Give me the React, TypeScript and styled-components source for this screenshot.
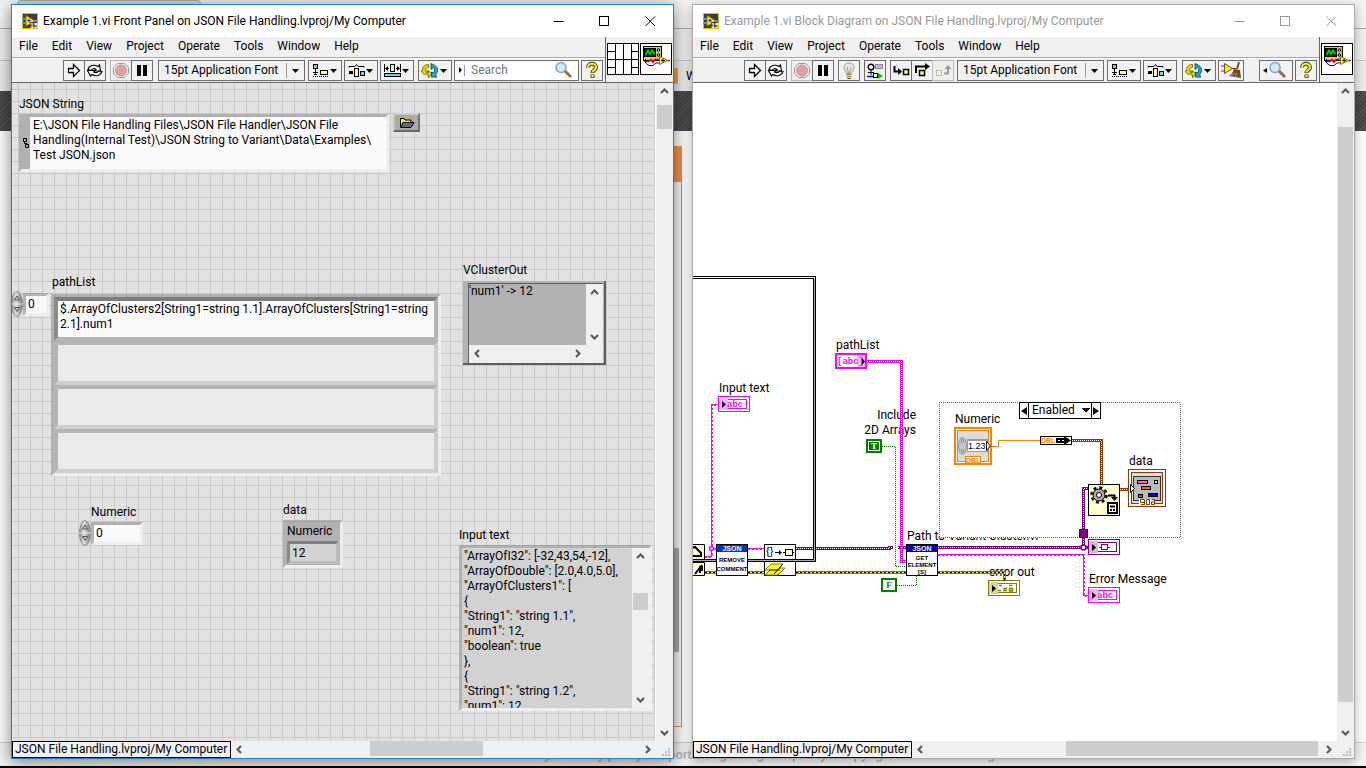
import React from 'react';
import styled, { createGlobalStyle, css } from 'styled-components';

const font = 'Roboto, "Open Sans", sans-serif';
const PINK = '#ff00ff';
const PURPLE = '#800080';
const BROWN = '#993300';
const ORANGE = '#ff8000';
const GREEN = '#008000';

const Global = createGlobalStyle`
  *, *::before, *::after { box-sizing: border-box; }
  body { margin: 0; font: 12px/15px ${font}; color: #000; }
  button, input, textarea, select { font: inherit; color: inherit; margin: 0; padding: 0; border: 0; border-radius: 0; background: none; outline: none; }
  svg { display: block; }
`;

/* ---------- desktop and the page behind the windows ---------- */

const Screen = styled.div`
  display: grid;
  grid-template-rows: 1fr 2px;
  min-height: 100vh;
  overflow: hidden;
`;
const Layer = css`
  grid-column: 1;
  grid-row: 1;
  min-width: 0;
`;
const Backdrop = styled.div`
  ${Layer}
  display: flex;
  flex-direction: column;
  background: #fdfdfd;
`;
const TabStrip = styled.div`
  height: 29px;
  padding-left: 17px;
  background: #f3f3f3;
  border-bottom: 1px solid #aaa;
`;
const BrowserTab = styled.div`
  width: 184px;
  height: 28px;
  border: 1px solid #aaa;
  border-radius: 4px 4px 0 0;
  background: #dcdcdc;
`;
const AddressRow = styled.div`
  height: 32px;
  background: #efefef;
  border-bottom: 1px solid #c8c8c8;
`;
const BookmarkRow = styled.div`
  display: flex;
  align-items: center;
  gap: 8px;
  height: 30px;
  padding-left: 662px;
  background: #ececec;
`;
const Favicon = styled.span`
  width: 16px;
  height: 16px;
  border-radius: 2px;
  background: #e8a33c;
`;
const DarkBand = styled.div`
  height: 40px;
  background: repeating-linear-gradient(135deg, #444 0 2px, #555 2px 3px);
`;
const PageBody = styled.div`
  flex: 1;
  display: grid;
  grid-template-columns: 1fr 1fr;
  padding: 15px 0;
`;
const Card = styled.div`
  display: flex;
  flex-direction: column;
  align-items: flex-end;
  margin-left: 300px;
  margin-right: 1px;
  border: 1px solid #e8874a;
  border-top: 36px solid #f0914d;
  background: #f7f7f7;
`;
const CardThumb = styled.div`
  flex: none;
  width: 8px;
  height: 104px;
  margin: 366px 2px 0 0;
  background: #aaa;
`;
const PageFooter = styled.div`
  height: 24px;
  padding-left: 544px;
  border-top: 1px solid #ccc;
  background: #f3f3f3;
  color: #b4b4b4;
  font: bold 12px/24px "Liberation Sans", sans-serif;
  white-space: nowrap;
  overflow: hidden;
`;
const Taskbar = styled.div`
  background: #000;
`;
const Desktop = styled.main`
  ${Layer}
  display: grid;
  grid-template-columns: 1fr 1fr;
  gap: 18px;
  padding: 4px 11px 7px;
`;

/* ---------- window frame ---------- */

const Win = styled.section<{ $active?: boolean }>`
  display: flex;
  flex-direction: column;
  min-width: 0;
  overflow: hidden;
  border: 1px solid ${p => (p.$active ? '#1883d7' : '#aaa')};
  background: #f0f0f0;
  box-shadow: 0 3px ${p => (p.$active ? '16px rgba(0,0,0,.5)' : '10px rgba(0,0,0,.3)')};
`;
const TitleBar = styled.header<{ $active?: boolean }>`
  display: flex;
  align-items: center;
  height: 32px;
  padding-left: 10px;
  background: #fff;
  color: ${p => (p.$active ? '#000' : '#999')};
`;
const Title = styled.h1`
  flex: 1;
  margin: 0 0 0 5px;
  font-size: 12px;
  font-weight: 400;
  line-height: 16px;
  white-space: nowrap;
`;
const CaptionButton = styled.button`
  display: grid;
  place-items: center;
  width: 46px;
  height: 32px;
`;
const Head = styled.div`
  display: flex;
  height: 46px;
  border-bottom: 1px solid #666;
`;
const Bars = styled.div`
  flex: 1;
  min-width: 0;
`;
const Menu = styled.nav`
  display: flex;
  gap: 14px;
  height: 21px;
  padding: 0 7px;
  border-bottom: 1px solid #a8a8a8;
`;
const MenuButton = styled.button`
  height: 18px;
  line-height: 18px;
`;
const Toolbar = styled.div`
  display: flex;
  height: 24px;
  padding: 1px 2px 0 51px;
  gap: 2px;
  border-top: 1px solid #fff;
`;
const Group = styled.div<{ $lead?: number }>`
  display: flex;
  margin-left: ${p => p.$lead ?? 0}px;
`;
const ToolButton = styled.button<{ $w?: number; $dim?: boolean }>`
  flex: none;
  display: grid;
  place-items: center;
  width: ${p => p.$w ?? 22}px;
  height: 21px;
  border: 1px solid ${p => (p.$dim ? '#bbb' : '#6e6e6e')};
  background: ${p => (p.$dim ? '#eee' : '#f2f2f2')};
  & + & { margin-left: -1px; }
`;
const FontRing = styled.label`
  display: flex;
  align-items: center;
  position: relative;
  width: 147px;
  height: 21px;
  border: 1px solid #6e6e6e;
  background: #f2f2f2;
`;
const RingSelect = styled.select`
  appearance: none;
  width: 100%;
  height: 19px;
  padding-left: 5px;
`;
const RingArrow = styled.span`
  position: absolute;
  right: 0;
  top: 2px;
  display: grid;
  place-items: center;
  width: 18px;
  height: 15px;
  border-left: 1px solid #999;
  pointer-events: none;
`;
const SearchBox = styled.label`
  display: flex;
  align-items: center;
  flex: 1;
  min-width: 0;
  height: 21px;
  margin-left: 0;
  padding: 0 6px 0 3px;
  border: 1px solid #6e6e6e;
  background: #fff;
`;
const SearchInput = styled.input`
  flex: 1;
  min-width: 0;
  margin-left: 5px;
  &::placeholder { color: #777; opacity: 1; }
`;
const IconPane = styled.div`
  display: flex;
  gap: 1px;
  padding: 6px 1px 0;
  border-left: 1px solid #666;
`;
const Body = styled.div`
  flex: 1;
  display: flex;
  min-height: 0;
`;
const FrontPanel = styled.div`
  position: relative;
  flex: 1;
  overflow: hidden;
  border-right: 1px solid #fff;
  background-color: #e2e2e2;
  background-image: linear-gradient(to right, #c8c8c8 1px, transparent 1px), linear-gradient(#c8c8c8 1px, transparent 1px);
  background-size: 12px 12px;
  background-position: 6px 6px;
`;
const DiagramPanel = styled.div`
  position: relative;
  flex: 1;
  overflow: hidden;
  background: #fff;
`;
const Bottom = styled.footer`
  display: flex;
  height: 17px;
`;
const Status = styled.div`
  flex: none;
  min-width: 219px;
  padding: 0 2px;
  border: 1px solid #000;
  background: #f2f2f2;
  white-space: nowrap;
`;
const Grip = styled.div`
  display: grid;
  place-items: end;
  width: 17px;
  padding: 0 2px 1px 0;
`;

/* ---------- scroll bars ---------- */

const Bar = styled.div<{ $row?: boolean }>`
  display: flex;
  flex: ${p => (p.$row ? '1' : 'none')};
  flex-direction: ${p => (p.$row ? 'row' : 'column')};
  width: ${p => (p.$row ? 'auto' : '17px')};
  height: ${p => (p.$row ? '17px' : 'auto')};
  background: #f0f0f0;
`;
const BarButton = styled.button`
  display: grid;
  place-items: center;
  flex: none;
  width: 17px;
  height: 17px;
`;
const BarSpace = styled.div<{ $n: number }>`
  flex: ${p => p.$n} 1 0;
`;
const Thumb = styled(BarSpace)<{ $row?: boolean }>`
  margin: ${p => (p.$row ? '0 0 2px' : '0 1px')};
  background: #cdcdcd;
`;

const chevrons = {
  up: 'M1 6 4.5 2.5 8 6',
  down: 'M1 3 4.5 6.5 8 3',
  left: 'M6 1 2.5 4.5 6 8',
  right: 'M3 1 6.5 4.5 3 8',
};
type Dir = keyof typeof chevrons;
const Chevron = ({ d }: { d: Dir }) => (
  <svg width="9" height="9"><path d={chevrons[d]} fill="none" stroke="#555" strokeWidth="2" /></svg>
);
const ScrollBar = ({ row, track }: { row?: boolean; track?: [number, number, number] }) => (
  <Bar $row={row}>
    <BarButton aria-label={row ? 'Scroll left' : 'Scroll up'}><Chevron d={row ? 'left' : 'up'} /></BarButton>
    <BarSpace $n={track ? track[0] : 1} />
    {track && <Thumb $n={track[1]} $row={row} />}
    {track && <BarSpace $n={track[2]} />}
    <BarButton aria-label={row ? 'Scroll right' : 'Scroll down'}><Chevron d={row ? 'right' : 'down'} /></BarButton>
  </Bar>
);

/* ---------- icons ---------- */

const AppIcon = () => (
  <svg width="16" height="16">
    <rect x=".5" y=".5" width="15" height="15" fill="#3c3c3c" stroke="#f5b800" />
    <path d="M0 6H5M0 10H5M10 8H16" stroke="#3f9fd0" strokeWidth="2" />
    <path d="M4 2.500 13 8 4 13z" fill="#ffd83a" stroke="#a87a00" />
    <path d="M5.500 7.500H8.500M7 6V9" stroke="#333" />
    <rect x="8" y="9" width="7" height="6" fill="#3c3c3c" />
    <text x="8" y="15" fontSize="7" fontWeight="700" fill="#fff" fontFamily="Liberation Sans">15</text>
  </svg>
);
const Caret = () => <svg width="7" height="4"><path d="M0 0H7L3.5 4z" fill="#000" /></svg>;
const RunIcon = () => (
  <svg width="20" height="19"><path d="M4.500 7.500H9.500V3.500L15.500 9.500 9.500 15.500V11.500H4.500z" fill="#fff" stroke="#000" strokeWidth="1.300" /></svg>
);
const LoopIcon = () => (
  <svg width="20" height="19" fill="#fff" stroke="#000" strokeWidth="1.100">
    <path d="M3 8.500C4 4.500 9 3 13 5.500L14.500 4 15.500 10H9.500L11 8.500C9 7 7 7.500 6 9.500z" />
    <path d="M17 10.500C16 14.500 11 16 7 13.500L5.500 15 2.500 9.500H9.500L8.500 11C11 12 13 11.500 14 10z" />
  </svg>
);
const AbortIcon = () => (
  <svg width="20" height="19">
    <path d="M6.500 2.500H13.500L17.500 6.500V12.500L13.500 16.500H6.500L2.500 12.500V6.500z" fill="#eee" stroke="#999" />
    <circle cx="10" cy="9.500" r="5.500" fill="#e0a0a0" stroke="#c89090" />
  </svg>
);
const PauseIcon = () => <svg width="20" height="19"><path d="M5 4H9V15H5zM11 4H15V15H11z" /></svg>;
const AlignIcon = () => (
  <svg width="32" height="19">
    <path d="M6.500 8V14M4 11.500H9M5 13.500H8" stroke="#000" />
    <rect x="4.500" y="3.500" width="4" height="4" fill="#5fd6f0" stroke="#000" />
    <rect x="11.500" y="9.500" width="7" height="4" fill="#fff79a" stroke="#000" />
    <path d="M4 15.500H20" stroke="#000" strokeDasharray="1 1" />
    <path d="M21 8H28L24.500 12z" />
  </svg>
);
const DistributeIcon = () => (
  <svg width="32" height="19">
    <path d="M4 6.500V5.500H10L11.500 3.500 13 5.500H19V6.500" fill="none" stroke="#000" />
    <rect x="4" y="10" width="4" height="3" />
    <rect x="9.500" y="7.500" width="4" height="8" fill="#fff79a" stroke="#000" />
    <rect x="15.500" y="10.500" width="4" height="4" fill="#5fd6f0" stroke="#000" />
    <path d="M21 8H28L24.500 12z" />
  </svg>
);
const ResizeIcon = () => (
  <svg width="32" height="19">
    <path d="M3.500 3V11M19.500 3V11M5 7.500H8M15 7.500H18" stroke="#000" />
    <path d="M4 7.500 7 5V10zM19 7.500 16 5V10z" />
    <rect x="9.500" y="3.500" width="4" height="7" fill="#fff79a" stroke="#000" />
    <rect x="3.500" y="12.500" width="16" height="3" fill="#5fd6f0" stroke="#000" />
    <path d="M21 8H28L24.500 12z" />
  </svg>
);
const ReorderIcon = () => (
  <svg width="32" height="19">
    <path d="M9.500 3.500C5 3.500 3 6.500 3.500 10H2L5.500 14 9 10H6.500C6.500 7.500 7.500 6.500 9.500 6.500zM8 11.500V14C8.500 14 9 14 9.500 14V17L12.500 13 9.500 9.500V11.500z" fill="#e2d800" stroke="#857c00" />
    <path d="M12 2.500V8.500L14.500 6.500C16 8 16 10 14.500 12L12.500 11V16H18L16.500 14C20 10 19 5.500 14 3.500z" fill="#2fa0c0" stroke="#12607c" />
    <path d="M21 8H28L24.500 12z" />
  </svg>
);
const Magnifier = ({ arrow }: { arrow?: boolean }) => (
  <svg width={arrow ? 30 : 18} height="19">
    <g transform={arrow ? 'translate(7 0)' : 'translate(0 0)'}>
      <path d="M11 10 17 16" stroke="#b4622a" strokeWidth="3" />
      <path d="M10 9 13 12" stroke="#777" strokeWidth="2" />
      <circle cx="7" cy="6.500" r="5" fill="#cfe9fb" stroke="#7da6d6" strokeWidth="1.500" />
    </g>
    {arrow && <path d="M6 7V12L2 9.500z" />}
  </svg>
);
const HelpIcon = () => (
  <svg width="20" height="19">
    <path d="M6 6.500C6 1.500 14 1.500 14 6.500 14 9 10.500 9 10.500 12M10.500 13.500V17" fill="none" stroke="#333" strokeWidth="4" />
    <path d="M6 6.500C6 1.500 14 1.500 14 6.500 14 9 10.500 9 10.500 11.500M10.500 14V16.500" fill="none" stroke="#ffee00" strokeWidth="2.200" />
  </svg>
);
const BulbIcon = () => (
  <svg width="20" height="19">
    <path d="M10 2C6 2 4.500 5 5 7.500 5.500 9.500 7.500 10.500 7.500 12.500H12.500C12.500 10.500 14.500 9.500 15 7.500 15.500 5 14 2 10 2z" fill="#e6e6e6" stroke="#999" />
    <path d="M8 6 9.500 12M12 6 10.500 12" stroke="#999" />
    <path d="M7.500 13.500H12.500M7.500 15.500H12.500" stroke="#b59428" strokeWidth="1.500" />
    <path d="M8.500 17.500H11.500" stroke="#333" />
  </svg>
);
const RetainIcon = () => (
  <svg width="20" height="19" fill="none" stroke="#000">
    <circle cx="6" cy="6" r="2.800" strokeWidth="1.400" />
    <path d="M6 9V14M3 11.500H9" />
    <rect x="10.500" y="3.500" width="7" height="4" fill="#bbb" stroke="#888" />
    <path d="M2 15.500H8" stroke="#0000e0" strokeWidth="1.500" />
    <rect x="8.500" y="12.500" width="4" height="4" fill="#fff" />
    <path d="M13 12 18 15 13 18z" fill="#00c000" stroke="none" />
  </svg>
);
const StepIntoIcon = () => (
  <svg width="20" height="19">
    <path d="M3.500 5V10.500H8" fill="none" stroke="#000" strokeWidth="2" /><path d="M7 7 11 10.500 7 14z" />
    <rect x="12.500" y="8.500" width="5" height="5" fill="#fff79a" stroke="#000" strokeWidth="1.500" />
  </svg>
);
const StepOverIcon = () => (
  <svg width="20" height="19">
    <path d="M4 12V5.500H14" fill="none" stroke="#000" strokeWidth="2" /><path d="M13 2 18 5.500 13 9z" />
    <rect x="7.500" y="9.500" width="5" height="5" fill="#fff79a" stroke="#000" strokeWidth="1.500" />
  </svg>
);
const StepOutIcon = () => (
  <svg width="20" height="19">
    <path d="M11 12.500H15V7" fill="none" stroke="#999" strokeWidth="2" /><path d="M11.500 8 15 4 18.500 8z" fill="#999" />
    <rect x="3.500" y="9.500" width="5" height="5" fill="#fffbd0" stroke="#bbb" />
  </svg>
);
const CleanIcon = () => (
  <svg width="24" height="19">
    <path d="M2 5H7M2 10H7M13 7.500H17" stroke="#e00000" />
    <path d="M5.500 2.500 13.500 7.500 5.500 12.500z" fill="#ffee00" stroke="#555" />
    <path d="M20 1 18 8" stroke="#7a4a1c" strokeWidth="2" />
    <path d="M15 8 21 9 22 17 10 15C13 13 14 11 15 8z" fill="#6a4a2a" /><path d="M12 15 16 12M16 16 18 12" stroke="#c9a66b" />
  </svg>
);
const ConnectorPane = () => (
  <svg width="32" height="32">
    <rect x=".5" y=".5" width="31" height="31" fill="#fff" stroke="#000" />
    <path d="M8.500 0V32M16.500 0V32M24.500 0V32M0 16.500H32M0 8.500H8M0 24.500H8M24 8.500H32M24 24.500H32" stroke="#000" />
  </svg>
);
const ViIcon = () => (
  <svg width="32" height="32">
    <rect x=".5" y=".5" width="31" height="31" fill="#fff" stroke="#000" />
    <rect x="3.500" y="3.500" width="18" height="14" fill="#cdcb98" stroke="#000" />
    <rect x="4.500" y="5.500" width="11" height="8" fill="#003300" stroke="#000" />
    <path d="M5.500 12 8 7.500 10 11 12 7.500 14.500 11" fill="none" stroke="#00ee00" strokeWidth="1.500" />
    <circle cx="18.500" cy="7" r="1.300" fill="none" stroke="#000" /><circle cx="18.500" cy="12" r="1.300" fill="none" stroke="#000" />
    <path d="M4 18.500H9L11 16.500 13 19.500 15 16.500H20M26 17.500H30" fill="none" stroke="#f00000" strokeWidth="1.500" />
    <path d="M5.500 16V20L9 22.500H13L16 20H20" fill="none" stroke="#0000c0" />
    <path d="M19.500 13.500 27.500 17.500 19.500 21.500z" fill="#ffff00" stroke="#8a7a00" />
    <path d="M21 17.500H25M23 15.500V19.500" stroke="#000" />
  </svg>
);
const CaptionButtons = ({ color }: { color: string }) => (
  <>
    <CaptionButton aria-label="Minimize"><svg width="11" height="11"><path d="M.5 5.500H10.500" stroke={color} /></svg></CaptionButton>
    <CaptionButton aria-label="Maximize"><svg width="11" height="11"><rect x=".5" y=".5" width="9" height="9" fill="none" stroke={color} /></svg></CaptionButton>
    <CaptionButton aria-label="Close"><svg width="11" height="11"><path d="M.5 .5 10 10M10 .5 .5 10" stroke={color} /></svg></CaptionButton>
  </>
);

const menuItems = ['File', 'Edit', 'View', 'Project', 'Operate', 'Tools', 'Window', 'Help'];
const MenuBar = () => (
  <Menu>{menuItems.map(m => <MenuButton key={m}>{m}</MenuButton>)}</Menu>
);
const RunControls = () => (
  <>
    <Group>
      <ToolButton aria-label="Run"><RunIcon /></ToolButton>
      <ToolButton aria-label="Run continuously"><LoopIcon /></ToolButton>
    </Group>
    <Group $lead={2}>
      <ToolButton $dim aria-label="Abort"><AbortIcon /></ToolButton>
      <ToolButton aria-label="Pause"><PauseIcon /></ToolButton>
    </Group>
  </>
);
const FontSelector = () => (
  <FontRing>
    <RingSelect aria-label="Text settings"><option>15pt Application Font</option></RingSelect>
    <RingArrow><Caret /></RingArrow>
  </FontRing>
);

/* ---------- front panel controls ---------- */

const Placed = styled.div<{ $x: number; $y: number; $w?: number }>`
  position: absolute;
  left: ${p => p.$x}px;
  top: ${p => p.$y}px;
  width: ${p => (p.$w ? p.$w + 'px' : 'auto')};
`;
const Caption = styled.label`
  display: block;
  white-space: nowrap;
`;
const Bevel = styled.div`
  display: flex;
  border: 3px solid;
  border-color: rgba(120,120,120,.45) rgba(245,245,245,.75) rgba(245,245,245,.75) rgba(120,120,120,.45);
`;
const PathTag = styled.div`
  display: grid;
  place-items: center;
  width: 8px;
  background: #b2b2b2;
`;
const PathArea = styled.textarea`
  display: block;
  flex: 1;
  height: 52px;
  padding: 1px 0 0 3px;
  background: #fafafa;
  resize: none;
  overflow: hidden;
  white-space: pre;
`;
const Browse = styled.button`
  display: grid;
  place-items: center;
  width: 27px;
  height: 19px;
  border: 2px solid;
  border-color: #ccc #777 #666 #c4c4c4;
  background: #aaa;
`;
const NumberRow = styled.div`
  display: flex;
  align-items: center;
`;
const NumberInput = styled.input<{ $w: number; $shade?: string }>`
  display: block;
  width: ${p => p.$w}px;
  height: 17px;
  padding-left: 2px;
  background: ${p => p.$shade ?? '#fafafa'};
`;
const ArrayFrame = styled(Bevel)`
  flex-direction: column;
`;
const ArrayCell = styled.textarea<{ $live?: boolean }>`
  display: block;
  height: 44px;
  padding: 1px 0 0 2px;
  resize: none;
  overflow: hidden;
  white-space: pre;
  border: 4px solid;
  border-color: ${p => (p.$live ? '#7d7d7d #b4b4b4 #b4b4b4 #8c8c8c' : '#b4b4b4 #cdcdcd #cdcdcd #b4b4b4')};
  background: ${p => (p.$live ? '#fafafa' : '#ebebeb')};
`;
const TreeFrame = styled.div`
  height: 84px;
  padding: 2px 1px 2px 5px;
  border: solid #5e5e5e;
  border-width: 0 2px 2px 0;
  background: #b2b2b2;
`;
const TreeInner = styled.div`
  display: grid;
  grid-template: 61px 17px / 1fr 17px;
  height: 80px;
  border: solid #5e5e5e;
  border-width: 1px 0 0 1px;
  background: #f0f0f0;
`;
const TreeList = styled.div`
  background: #b2b2b2;
`;
const Cluster = styled(Bevel)`
  flex-direction: column;
  height: 48px;
  padding: 1px 0 0 1px;
  background: #b2b2b2;
  background-clip: padding-box;
`;
const ClusterValue = styled(Bevel)`
  width: 52px;
  margin-top: 2px;
  border-color: #808080 #bdbdbd #bdbdbd #8a8a8a;
`;
const LogArea = styled.textarea`
  display: block;
  flex: 1;
  height: 160px;
  padding: 1px 0 0 2px;
  background: #d2d2d2;
  resize: none;
  overflow: hidden;
  white-space: pre;
`;

const Spinner = () => (
  <svg width="12" height="26">
    <defs>
      <linearGradient id="metal" x1="0" x2="1"><stop offset="0" stopColor="#8a8a8a" /><stop offset=".4" stopColor="#e4e4e4" /><stop offset="1" stopColor="#777" /></linearGradient>
    </defs>
    <ellipse cx="6" cy="13" rx="5.500" ry="12.500" fill="url(#metal)" stroke="#8c8c8c" />
    <path d="M0 13H12" stroke="#eee" />
    <path d="M3.500 9 6 5 8.500 9z" fill="#ccc" stroke="#555" /><path d="M3.500 16.500 6 20.500 8.500 16.500z" fill="#ccc" stroke="#555" />
  </svg>
);

const log = `"ArrayOfI32": [-32,43,54,-12],
"ArrayOfDouble": [2.0,4.0,5.0],
"ArrayOfClusters1": [
{
"String1": "string 1.1",
"num1": 12,
"boolean": true
},
{
"String1": "string 1.2",
"num1": 12,`;

const Panel = () => (
  <FrontPanel>
    <Placed $x={7} $y={14}><Caption htmlFor="path">JSON String</Caption></Placed>
    <Placed $x={7} $y={31} $w={370}>
      <Bevel>
        <PathTag><svg width="6" height="10"><path d="M.5 .5H3.500V3.500H.5zM2.500 6.500H5.500V9.500H2.500zM1.500 4V5.500H4V7" fill="none" stroke="#000" /></svg></PathTag>
        <PathArea id="path" spellCheck={false} defaultValue={'E:\\JSON File Handling Files\\JSON File Handler\\JSON File\nHandling(Internal Test)\\JSON String to Variant\\Data\\Examples\\\nTest JSON.json'} />
      </Bevel>
    </Placed>
    <Placed $x={381} $y={30}>
      <Browse aria-label="Browse">
        <svg width="16" height="12"><path d="M1.500 10V1.500H5L6 3H12V5" fill="#ffee00" stroke="#000" /><path d="M1.500 10.500 4 5.500H15L12 10.500z" fill="#6a6a6a" stroke="#000" /></svg>
      </Browse>
    </Placed>

    <Placed $x={40} $y={192}><Caption htmlFor="cell0">pathList</Caption></Placed>
    <Placed $x={-1} $y={208}>
      <NumberRow><Spinner /><Bevel><NumberInput $w={20} aria-label="Array index" defaultValue="0" /></Bevel></NumberRow>
    </Placed>
    <Placed $x={39} $y={211} $w={390}>
      <ArrayFrame>
        <ArrayCell $live id="cell0" spellCheck={false} defaultValue={'$.ArrayOfClusters2[String1=string 1.1].ArrayOfClusters[String1=string\n2.1].num1'} />
        <ArrayCell aria-label="Element 1" />
        <ArrayCell aria-label="Element 2" />
        <ArrayCell aria-label="Element 3" />
      </ArrayFrame>
    </Placed>

    <Placed $x={451} $y={180}><Caption as="div">VClusterOut</Caption></Placed>
    <Placed $x={451} $y={198} $w={143}>
      <TreeFrame>
        <TreeInner>
          <TreeList>'num1' -&gt; 12</TreeList>
          <ScrollBar />
          <ScrollBar row />
        </TreeInner>
      </TreeFrame>
    </Placed>

    <Placed $x={79} $y={422}><Caption htmlFor="numeric">Numeric</Caption></Placed>
    <Placed $x={67} $y={437}>
      <NumberRow><Spinner /><Bevel><NumberInput $w={46} id="numeric" defaultValue="0" /></Bevel></NumberRow>
    </Placed>

    <Placed $x={271} $y={420}><Caption as="div">data</Caption></Placed>
    <Placed $x={271} $y={437} $w={60}>
      <Cluster>
        <Caption htmlFor="dataNumeric">Numeric</Caption>
        <ClusterValue><NumberInput $w={46} $shade="#d2d2d2" id="dataNumeric" readOnly value="12" /></ClusterValue>
      </Cluster>
    </Placed>

    <Placed $x={447} $y={445}><Caption htmlFor="log">Input text</Caption></Placed>
    <Placed $x={447} $y={462} $w={193}>
      <Bevel>
        <LogArea id="log" readOnly value={log} />
        <ScrollBar track={[28, 17, 81]} />
      </Bevel>
    </Placed>
  </FrontPanel>
);

/* ---------- block diagram ---------- */

const Wire = ({ d, color, dots = '#fff' }: { d: string; color: string; dots?: string }) => (
  <g fill="none" shapeRendering="crispEdges">
    <path d={d} stroke={color} strokeWidth="3" />
    <path d={d} stroke={dots} strokeDasharray="1 1" />
  </g>
);
const StringWire = ({ d }: { d: string }) => (
  <g fill="none" stroke={PINK} shapeRendering="crispEdges">
    <path d={d} />
    <path d={d} strokeWidth="2" strokeDasharray="2 2" />
  </g>
);
const ErrorWire = ({ d }: { d: string }) => (
  <g fill="none" shapeRendering="crispEdges">
    <path d={d} stroke="#808000" strokeWidth="3" />
    <path d={d} stroke="#ffff00" strokeWidth="1" />
    <path d={d} stroke="#000" strokeDasharray="2 2" />
  </g>
);
const StringTerminal = ({ x, y }: { x: number; y: number }) => (
  <g transform={`translate(${x} ${y})`}>
    <rect x=".5" y=".5" width="31" height="15" fill="#fff" stroke={PINK} />
    <rect x="3.500" y="3.500" width="25" height="9" fill="#fff" stroke={PINK} />
    <rect x="1" y="2" width="9" height="12" fill="#ffb0ff" />
    <text x="9" y="11" className="abc">abc</text>
    <path d="M4 5V12L8 8.500z" />
  </g>
);
const SubVi = ({ x, y, head, lines }: { x: number; y: number; head: string; lines: [string, number][] }) => (
  <g transform={`translate(${x} ${y})`}>
    <rect x=".5" y=".5" width="31" height="31" fill="#fff" stroke="#000" />
    <rect x="1" y="1" width="30" height="7" fill={head} />
    <text x="16" y="7" className="head">JSON</text>
    {lines.map(([t, ty]) => <text key={t} x="16" y={ty} className="tiny">{t}</text>)}
  </g>
);
const DiagramSvg = styled.svg`
  position: absolute;
  left: 0;
  top: 0;
  text { font: 12px ${font}; }
  text.abc { font: bold 9px "Liberation Mono", monospace; fill: ${PINK}; }
  text.head { font: bold 7px "Liberation Sans", sans-serif; fill: #fff; text-anchor: middle; }
  text.tiny { font: bold 6px "Liberation Sans", sans-serif; text-anchor: middle; }
  text.dbl { font: bold 7px "Liberation Sans", sans-serif; fill: ${ORANGE}; }
  text.bool { font: bold 9px "Liberation Serif", serif; text-anchor: middle; }
  text.num { font: 9px "Liberation Sans", sans-serif; }
  text.sym { font: 11px "Liberation Sans", sans-serif; }
`;
const Selector = styled.div`
  display: flex;
  align-items: center;
  height: 17px;
  border: 1px solid #000;
  background: #fff;
`;
const SelectorStep = styled.button`
  display: grid;
  place-items: center;
  width: 8px;
  height: 15px;
`;
const CaseSelect = styled.select`
  appearance: none;
  flex: 1;
  min-width: 0;
  height: 15px;
  padding-left: 3px;
  border: solid #000;
  border-width: 0 1px;
  background: no-repeat right 1px center / 8px 5px conic-gradient(from -39deg at 50% 100%, #000 78deg, transparent 0);
`;

const Diagram = () => (
  <DiagramPanel>
    <DiagramSvg width="645" height="658" viewBox="693 83 645 658">
      <text x="836" y="349">pathList</text>
      <text x="719" y="392">Input text</text>
      <text x="916" y="419" textAnchor="end">Include</text>
      <text x="916" y="434" textAnchor="end">2D Arrays</text>
      <text x="907" y="540">Path to Variant Cluster.vi</text>
      <text x="989" y="576">error out</text>
      <text x="1089" y="583">Error Message</text>

      <g stroke="#000">
        <path d="M692 544.500H704.500V559.500H692zM692 562.500H704.500V575.500H692z" fill="#ffffcc" />
        <path d="M692 548 695 547 701 553V556H692M695 574 702 565M702 571V566M700 566V573" fill="none" strokeWidth="2" />
      </g>
      <StringWire d="M720 404.500H711.500V548" />
      <StringWire d="M705 556.500H711.500V548" />
      <StringWire d="M711 548.500H716M748 548.500H764" />
      <circle cx="711.500" cy="548.500" r="2" fill="#fff" stroke={PINK} strokeWidth="1.500" />
      <ErrorWire d="M705 572.500H716M748 572.500H764M796 572.500H906M938 572.500H1004.500V581" />
      <Wire d="M796 548.500H889V547.500H893M898 547.500H906" color={PURPLE} />
      <g transform="translate(764 544)">
        <rect x=".5" y=".5" width="31" height="31" fill="#fff" stroke="#000" />
        <text x="2" y="11" className="sym">{'{}'}</text>
        <path d="M11 8.500H16" stroke="#000" /><path d="M15 6 18 8.500 15 11z" />
        <path d="M19 8.500H30" stroke="#000" /><rect x="21.500" y="5.500" width="7" height="6" fill="#ffffcc" stroke="#000" />
        <path d="M1 26 7 20H19L15 24H21L14 31H1L6 26z" fill="#ffff00" stroke="#808000" />
        <path d="M10 30 19 20M5 26H16" stroke="#000" />
      </g>
      <g fill="none">
        <path d="M693 277.500H814.500V560.500H693" stroke="#000" strokeWidth="3" />
        <path d="M693 277.500H814.500V560.500H693" stroke="#fff" />
        <path d="M814.500 279V560.500H693" stroke="#aaa" />
      </g>
      <SubVi x={716} y={544} head="#0033cc" lines={[['REMOVE', 18], ['COMMENT', 27]]} />

      <Wire d="M867 361.500H901.500V561.500H907" color={PINK} />
      <g transform="translate(835 353)">
        <rect x="1" y="1" width="30" height="14" fill="#fff" stroke={PINK} strokeWidth="2" />
        <rect x="22" y="2" width="8" height="12" fill="#ffb0ff" />
        <text x="2" y="11" className="abc">[abc]</text>
        <path d="M27 5V12L30 8.500z" />
      </g>
      <StringTerminal x={718} y={396} />

      <path d="M882 446.500H895.500V566.500H906M897 585.500H916.500V576" fill="none" stroke={GREEN} strokeDasharray="1 1" shapeRendering="crispEdges" />
      <rect x="867" y="440" width="14" height="12" fill="#fff" stroke={GREEN} strokeWidth="2" />
      <rect x="869" y="442" width="10" height="8" fill={GREEN} />
      <text x="874" y="449" className="bool" fill="#fff">T</text>
      <rect x="882" y="579" width="14" height="12" fill="#fff" stroke={GREEN} strokeWidth="2" />
      <text x="889" y="588" className="bool" fill={GREEN}>F</text>
      <SubVi x={906} y={544} head="#0000cc" lines={[['GET', 16], ['ELEMENT', 23], ['[S]', 30]]} />

      <rect x="939" y="402" width="242" height="136" fill="#fff" />
      <path d="M939 402.500H1181M939 537.500H1181M939.500 404V537M1180.500 404V537" stroke="#666" strokeDasharray="1 1" />
      <text x="955" y="423">Numeric</text>
      <text x="1129" y="465">data</text>

      <path d="M992 446.500H998.500V440.500H1040" fill="none" stroke={ORANGE} />
      <g transform="translate(954 427)">
        <rect x="1" y="1" width="36" height="36" fill="#fff" stroke={ORANGE} strokeWidth="2" />
        <rect x="3.500" y="3.500" width="31" height="31" fill="#dcdcdc" stroke={ORANGE} />
        <ellipse cx="8.500" cy="19" rx="4" ry="8.500" fill="#c4c4c4" stroke="#999" />
        <path d="M7 15 8.500 12 10 15zM7 23 8.500 26 10 23z" fill="#eee" stroke="#888" />
        <rect x="13" y="12" width="22" height="13" fill="#999" />
        <rect x="14" y="14" width="19" height="10" fill="#fff" />
        <text x="14" y="22" className="num">1.23</text>
        <path d="M32.500 14.500 36.500 19 32.500 23.500z" fill="#fff" stroke="#000" />
        <rect x="11.500" y="29.500" width="15" height="7" fill="#fff" stroke={ORANGE} />
        <text x="12" y="36" className="dbl">DBL</text>
      </g>
      <Wire d="M1072 440.500H1101.500V484" color={BROWN} />
      <rect x="1040.500" y="436.500" width="31" height="8" fill="#ffffcc" stroke="#000" />
      <text x="1041" y="443" className="dbl">DBL</text>
      <path d="M1056 438H1064V436L1071 440.500 1064 445V443H1056z" />
      <path d="M1058 440.500H1066" stroke="#fff" strokeDasharray="2 2" />
      <Wire d="M1120 489.500H1130" color={BROWN} />
      <Wire d="M938 547.500H1088M1083.500 548V488.500H1088" color={PURPLE} />
      <circle cx="1083.500" cy="547.500" r="2.500" fill="#fff" stroke={PURPLE} strokeWidth="1.500" />
      <rect x="1079.500" y="529.500" width="8" height="8" fill={PURPLE} stroke="#4a004a" />
      <g transform="translate(1088 484)">
        <rect x=".5" y=".5" width="31" height="31" fill="#ffffcc" stroke="#000" />
        <circle cx="11" cy="11" r="6" fill="#aaa" stroke="#000" />
        <circle cx="11" cy="11" r="7.500" fill="none" stroke="#000" strokeWidth="2.500" strokeDasharray="3 2.900" />
        <circle cx="11" cy="11" r="2.500" fill="#fff" stroke="#000" />
        <path d="M20 11.500H26.500V15" fill="none" stroke="#000" strokeWidth="2" /><path d="M23 13H30L26.500 17z" />
        <rect x="20" y="19" width="9" height="10" fill="#fff" stroke="#000" strokeWidth="2" />
        <path d="M22 22.500H27M22 26H24M25 26H27" stroke="#000" strokeWidth="2" />
      </g>
      <g transform="translate(1128 469)">
        <rect x=".5" y=".5" width="37" height="37" fill="#fff" stroke={BROWN} />
        <rect x="3.500" y="3.500" width="31" height="31" fill="#ddd" stroke={BROWN} />
        <rect x="5.500" y="7.500" width="27" height="24" fill="#bbb" stroke="#333" />
        <g stroke="#000">
          <rect x="9.500" y="11.500" width="10" height="3" fill="#ff66cc" />
          <rect x="26.500" y="11.500" width="3" height="3" fill="#ddd" />
          <rect x="13.500" y="17.500" width="9" height="3" fill="#ff5a2a" />
          <rect x="10.500" y="25.500" width="4" height="3" fill="#00b000" />
          <rect x="20.500" y="24.500" width="9" height="3" fill="#0000e0" />
        </g>
        <rect x="11" y="30" width="16" height="6" fill="#fff" />
        <path d="M12.500 30.500H16.500V33.500H12.500zM16.500 33V35.500H13M18.500 30.500H21.500V35.500H18.500zM23.500 30.500H26.500V35.500H23.500V33H26" fill="none" stroke={BROWN} />
        <path d="M2.500 15.500 6.500 19.500 2.500 23.500z" fill="#fff" stroke="#000" />
      </g>

      <g transform="translate(1088 539)">
        <rect x=".5" y=".5" width="31" height="15" fill="#fff" stroke={PURPLE} />
        <rect x="3.500" y="3.500" width="25" height="9" fill="#fff" stroke={PURPLE} />
        <rect x="1" y="2" width="9" height="12" fill="#dcb4dc" />
        <path d="M4 5V12L8 8.500z" />
        <path d="M11 8.500H22" stroke={PURPLE} /><rect x="13.500" y="5.500" width="6" height="5" fill="#fff" stroke={PURPLE} />
      </g>
      <StringWire d="M938 554.500H1083.500V595.500H1088" />
      <StringTerminal x={1088} y={587} />
      <g transform="translate(988 580)">
        <rect x=".5" y=".5" width="31" height="15" fill="#fff" stroke="#808000" />
        <rect x="3.500" y="3.500" width="25" height="9" fill="#fff" stroke="#808000" />
        <rect x="1" y="2" width="9" height="12" fill="#d6d6a8" />
        <path d="M4 5V12L8 8.500z" />
        <path d="M11 5.500H14M10 10.500H13M15 8.500H19M15 10.500H19M21 5.500H24M21.500 8.500H24.500V11H21.500z" fill="none" stroke="#808000" strokeWidth="1.500" />
      </g>
    </DiagramSvg>
    <Placed $x={326} $y={319} $w={82}>
      <Selector>
        <SelectorStep aria-label="Previous case"><svg width="6" height="8"><path d="M6 0V8L0 4z" /></svg></SelectorStep>
        <CaseSelect aria-label="Case"><option>Enabled</option></CaseSelect>
        <SelectorStep aria-label="Next case"><svg width="6" height="8"><path d="M0 0V8L6 4z" /></svg></SelectorStep>
      </Selector>
    </Placed>
  </DiagramPanel>
);

const StatusBar = ({ track }: { track: [number, number, number] }) => (
  <Bottom>
    <Status>JSON File Handling.lvproj/My Computer</Status>
    <ScrollBar row track={track} />
    <Grip><svg width="9" height="9"><path d="M6 1H8M3 4H5M6 4H8M0 7H2M3 7H5M6 7H8" stroke="#bbb" strokeWidth="2" /></svg></Grip>
  </Bottom>
);

export default function App() {
  return (
    <Screen>
      <Global />
      <Backdrop aria-hidden="true">
        <TabStrip><BrowserTab /></TabStrip>
        <AddressRow />
        <BookmarkRow><Favicon />W</BookmarkRow>
        <DarkBand />
        <PageBody><Card><CardThumb /></Card></PageBody>
        <PageFooter>y · Privacy policy · Report a bug · Blog and policy · Copyright 2014 use to song</PageFooter>
      </Backdrop>
      <Desktop>
        <Win $active>
          <TitleBar $active>
            <AppIcon />
            <Title>Example 1.vi Front Panel on JSON File Handling.lvproj/My Computer</Title>
            <CaptionButtons color="#000" />
          </TitleBar>
          <Head>
            <Bars>
              <MenuBar />
              <Toolbar>
                <RunControls />
                <Group $lead={3}><FontSelector /></Group>
                <Group $lead={1}><ToolButton $w={34} aria-label="Align objects"><AlignIcon /></ToolButton></Group>
                <Group><ToolButton $w={34} aria-label="Distribute objects"><DistributeIcon /></ToolButton></Group>
                <Group><ToolButton $w={34} aria-label="Resize objects"><ResizeIcon /></ToolButton></Group>
                <Group $lead={2}><ToolButton $w={34} aria-label="Reorder"><ReorderIcon /></ToolButton></Group>
                <SearchBox>
                  <svg width="8" height="11"><path d="M1 2V8L4 5z" /><path d="M6.500 0V11" stroke="#999" /></svg>
                  <SearchInput aria-label="Search" placeholder="Search" />
                  <Magnifier />
                </SearchBox>
                <ToolButton aria-label="Context help"><HelpIcon /></ToolButton>
              </Toolbar>
            </Bars>
            <IconPane><ConnectorPane /><ViIcon /></IconPane>
          </Head>
          <Body><Panel /><ScrollBar track={[5, 24, 595]} /></Body>
          <StatusBar track={[122, 113, 156]} />
        </Win>
        <Win>
          <TitleBar>
            <AppIcon />
            <Title>Example 1.vi Block Diagram on JSON File Handling.lvproj/My Computer</Title>
            <CaptionButtons color="#999" />
          </TitleBar>
          <Head>
            <Bars>
              <MenuBar />
              <Toolbar>
                <RunControls />
                <Group $lead={2}><ToolButton aria-label="Highlight execution"><BulbIcon /></ToolButton></Group>
                <Group $lead={2}><ToolButton aria-label="Retain wire values"><RetainIcon /></ToolButton></Group>
                <Group $lead={2}>
                  <ToolButton aria-label="Step into"><StepIntoIcon /></ToolButton>
                  <ToolButton aria-label="Step over"><StepOverIcon /></ToolButton>
                  <ToolButton $dim aria-label="Step out"><StepOutIcon /></ToolButton>
                </Group>
                <Group $lead={1}><FontSelector /></Group>
                <Group $lead={1}><ToolButton $w={34} aria-label="Align objects"><AlignIcon /></ToolButton></Group>
                <Group><ToolButton $w={34} aria-label="Distribute objects"><DistributeIcon /></ToolButton></Group>
                <Group $lead={3}><ToolButton $w={34} aria-label="Reorder"><ReorderIcon /></ToolButton></Group>
                <Group><ToolButton $w={26} aria-label="Clean up diagram"><CleanIcon /></ToolButton></Group>
                <Group $lead={13}><ToolButton $w={34} aria-label="Search"><Magnifier arrow /></ToolButton></Group>
                <Group><ToolButton aria-label="Context help"><HelpIcon /></ToolButton></Group>
              </Toolbar>
            </Bars>
            <IconPane><ViIcon /></IconPane>
          </Head>
          <Body><Diagram /><ScrollBar track={[27, 575, 22]} /></Body>
          <StatusBar track={[138, 253, 2]} />
        </Win>
      </Desktop>
      <Taskbar />
    </Screen>
  );
}
